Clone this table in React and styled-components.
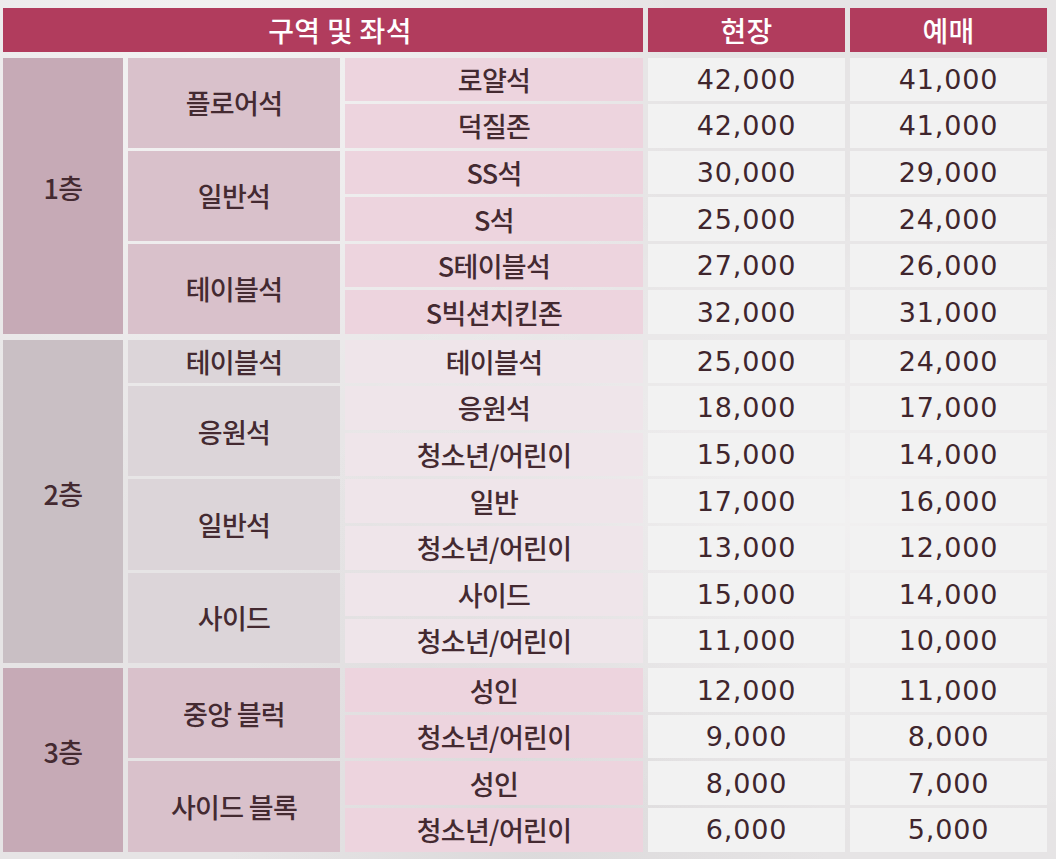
import React from "react";
import styled, { createGlobalStyle } from "styled-components";

const GlobalStyle = createGlobalStyle`
  html, body {
    margin: 0;
    padding: 0;
  }
  body {
    width: 1056px;
    height: 859px;
    overflow: hidden;
    background-color: #e6e4e5;
    background-image:
      radial-gradient(ellipse at 20% 10%, rgba(255,255,255,0.55), rgba(255,255,255,0) 40%),
      radial-gradient(ellipse at 80% 60%, rgba(255,255,255,0.45), rgba(255,255,255,0) 45%),
      radial-gradient(ellipse at 50% 95%, rgba(200,198,200,0.35), rgba(200,198,200,0) 40%);
    font-family: "Noto Sans CJK KR", "Noto Sans", sans-serif;
    color: #442a31;
  }
`;

const Page = styled.div`
  display: flex;
  flex-direction: column;
  gap: 5.5px;
  padding: 8px 9px 0 3px;
`;

const HeaderRow = styled.div`
  display: grid;
  grid-template-columns: 640px 197px 197px;
  column-gap: 5px;
  height: 44px;
`;

const HeaderCell = styled.div`
  display: flex;
  align-items: center;
  justify-content: center;
  background: #b13c5d;
  color: #ffffff;
  font-size: 28px;
  font-weight: 500;
  letter-spacing: 0.3px;
  padding-left: ${(p) => p.$shift || 0}px;
`;

const FloorGrid = styled.div`
  display: grid;
  grid-template-columns: 120px 212px 298px 197px 197px;
  grid-auto-rows: 43.6px;
  gap: 3px 5px;
`;

const tones = {
  rose: { floor: "#c6aab6", group: "#d9c1cb", seat: "#edd4de" },
  grey: { floor: "#c9bfc4", group: "#dcd5d9", seat: "#efe5ea" },
};

const Cell = styled.div`
  grid-column: ${(p) => p.$col};
  grid-row: ${(p) => p.$row} / span ${(p) => p.$span || 1};
  display: flex;
  align-items: center;
  justify-content: center;
  font-size: 27px;
  font-weight: 500;
  letter-spacing: -0.7px;
  color: #442a31;
  white-space: nowrap;
`;

const FloorCell = styled(Cell)`
  background: ${(p) => tones[p.$tone].floor};
  padding-bottom: 16px;
`;

const GroupCell = styled(Cell)`
  background: ${(p) => tones[p.$tone].group};
`;

const SeatCell = styled(Cell)`
  background: ${(p) => tones[p.$tone].seat};
`;

const PriceCell = styled(Cell)`
  background: #f2f2f2;
  font-family: "DejaVu Sans", "Noto Sans", sans-serif;
  font-weight: 400;
  font-size: 27px;
  letter-spacing: 0.8px;
  color: #3f262d;
`;

const floors = [
  {
    name: "1층",
    tone: "rose",
    groups: [
      { name: "플로어석", seats: [["로얄석", "42,000", "41,000"], ["덕질존", "42,000", "41,000"]] },
      { name: "일반석", seats: [["SS석", "30,000", "29,000"], ["S석", "25,000", "24,000"]] },
      { name: "테이블석", seats: [["S테이블석", "27,000", "26,000"], ["S빅션치킨존", "32,000", "31,000"]] },
    ],
  },
  {
    name: "2층",
    tone: "grey",
    groups: [
      { name: "테이블석", seats: [["테이블석", "25,000", "24,000"]] },
      { name: "응원석", seats: [["응원석", "18,000", "17,000"], ["청소년/어린이", "15,000", "14,000"]] },
      { name: "일반석", seats: [["일반", "17,000", "16,000"], ["청소년/어린이", "13,000", "12,000"]] },
      { name: "사이드", seats: [["사이드", "15,000", "14,000"], ["청소년/어린이", "11,000", "10,000"]] },
    ],
  },
  {
    name: "3층",
    tone: "rose",
    groups: [
      { name: "중앙 블럭", seats: [["성인", "12,000", "11,000"], ["청소년/어린이", "9,000", "8,000"]] },
      { name: "사이드 블록", seats: [["성인", "8,000", "7,000"], ["청소년/어린이", "6,000", "5,000"]] },
    ],
  },
];

function Floor({ floor }) {
  const total = floor.groups.reduce((n, g) => n + g.seats.length, 0);
  const cells = [
    <FloorCell key="floor" $col={1} $row={1} $span={total} $tone={floor.tone}>
      {floor.name}
    </FloorCell>,
  ];
  let row = 1;
  floor.groups.forEach((g, gi) => {
    cells.push(
      <GroupCell key={`g${gi}`} $col={2} $row={row} $span={g.seats.length} $tone={floor.tone}>
        {g.name}
      </GroupCell>
    );
    g.seats.forEach(([seat, onsite, presale], si) => {
      const r = row + si;
      cells.push(
        <SeatCell key={`s${gi}-${si}`} $col={3} $row={r} $tone={floor.tone}>
          {seat}
        </SeatCell>,
        <PriceCell key={`o${gi}-${si}`} $col={4} $row={r}>
          {onsite}
        </PriceCell>,
        <PriceCell key={`p${gi}-${si}`} $col={5} $row={r}>
          {presale}
        </PriceCell>
      );
    });
    row += g.seats.length;
  });
  return <FloorGrid>{cells}</FloorGrid>;
}

export default function App() {
  return (
    <>
      <GlobalStyle />
      <Page>
        <HeaderRow>
          <HeaderCell $shift={34}>구역 및 좌석</HeaderCell>
          <HeaderCell>현장</HeaderCell>
          <HeaderCell>예매</HeaderCell>
        </HeaderRow>
        {floors.map((f) => (
          <Floor key={f.name} floor={f} />
        ))}
      </Page>
    </>
  );
}
